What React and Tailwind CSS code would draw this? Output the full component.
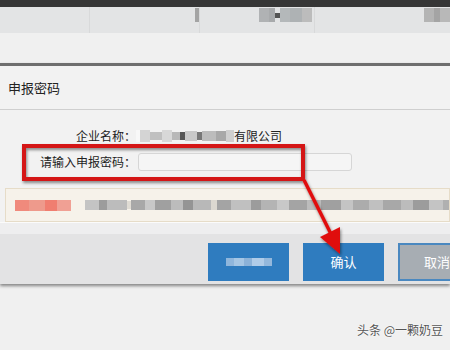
import React from 'react';

const cjk = { fontFamily: '"Noto Sans CJK SC", "Liberation Sans", sans-serif' };

// pixelated (mosaic) blocks standing in for blurred text
function Mosaic({ cells, className = '' }) {
    return (
        <div className={`flex items-center shrink-0 ${className}`}>
            {cells.map((c, i) => (
                <div key={i} className="shrink-0" style={{ width: c[0], height: c[1], background: c[2] }} />
            ))}
        </div>
    );
}

export default function App() {
    const company = [
        [4, 12, '#f8f8f8'], [10, 12, '#d4d4d4'], [12, 8, '#c0c0c0'], [10, 12, '#d8d8d8'],
        [8, 8, '#b8b8b8'], [5, 8, '#555'], [12, 10, '#c8c8c8'], [5, 8, '#777'],
        [14, 10, '#bcbcbc'], [10, 10, '#a8a8a8'], [8, 12, '#cfcfcf'],
    ];
    const notice = [
        [14, 10, '#c4c4c4'], [8, 10, '#9c9c9c'], [20, 10, '#bcbcbc'], [4, 8, '#e0dcd4'],
        [14, 10, '#a8a8a8'], [10, 10, '#c8c8c8'], [16, 10, '#a0a0a0'], [12, 10, '#bcbcbc'],
        [10, 10, '#949494'], [18, 10, '#b8b8b8'], [6, 10, '#dcd8d0'], [14, 10, '#a4a4a4'],
        [20, 10, '#c0c0c0'], [10, 10, '#9c9c9c'], [16, 10, '#b4b4b4'], [12, 10, '#c8c8c8'],
        [18, 10, '#a4a4a4'], [14, 10, '#bcbcbc'], [20, 10, '#a0a0a0'], [12, 10, '#c4c4c4'],
        [16, 10, '#acacac'], [14, 10, '#c0c0c0'], [18, 10, '#a8a8a8'], [12, 10, '#bcbcbc'],
        [16, 10, '#9c9c9c'], [14, 10, '#c4c4c4'], [20, 10, '#b0b0b0'],
    ];

    return (
        <div className="relative w-[450px] h-[350px] overflow-hidden bg-[#f0f0f0] text-[#222]" style={cjk}>
            {/* page behind the dialog */}
            <div className="h-[7px] bg-[#363636]" />
            <div className="h-[26px] bg-[#e3e4e5] flex relative">
                <div className="w-[90px] border-r border-[#d8d9da]" />
                <div className="w-[110px] border-r border-[#d8d9da] relative">
                    <div className="absolute right-0 top-[1px] w-[4px] h-[14px] bg-[#a4a4a4] blur-[0.5px]" />
                </div>
                <div className="w-[115px] border-r border-[#d8d9da] flex items-start pt-[1px] pl-[59px]">
                    <Mosaic cells={[[10, 14, '#b0b2b4'], [6, 14, '#a8aaac'], [5, 5, '#555'], [10, 14, '#b4b8ba'], [12, 14, '#aeb2b4'], [10, 14, '#bcbcbc']]} className="blur-[0.5px]" />
                </div>
                <div className="flex-1 flex justify-end items-start pt-[1px]">
                    <Mosaic cells={[[10, 14, '#b4b4b4'], [6, 14, '#a4a4a4'], [10, 14, '#b8b8b8']]} className="blur-[0.5px]" />
                </div>
            </div>
            <div className="h-[30px] bg-[#f0f0f0]" />

            {/* dialog */}
            <div className="border-t-[3px] border-[#6e6e6e] bg-[#f2f2f2] shadow-[0_2px_3px_rgba(0,0,0,0.45)]">
                <div className="h-[44px] border-b border-[#cfcfcf] flex items-center pl-[8px] text-[13px]">申报密码</div>

                <div className="pt-[16px] text-[12px]">
                    <div className="flex items-center h-[20px]">
                        <div className="w-[136px] text-right">企业名称：</div>
                        <Mosaic cells={company} className="blur-[0.6px]" />
                        <span>有限公司</span>
                    </div>
                    <div className="flex items-center h-[20px] mt-[6px]">
                        <div className="w-[136px] text-right">请输入申报密码：</div>
                        <div className="ml-[2px] w-[214px] h-[18px] rounded-[3px] border border-[#d6d6d6] bg-[#f5f5f5]" />
                    </div>
                    <div className="ml-[5px] mt-[16px] h-[34px] border border-[#e6dcc8] bg-[#f6f2ea] flex items-center pl-[9px] gap-[14px] overflow-hidden">
                        <Mosaic cells={[[14, 11, '#f08a7c'], [16, 11, '#ee9a8c'], [12, 11, '#f07e70'], [14, 11, '#f0a094']]} className="blur-[0.6px]" />
                        <Mosaic cells={notice} className="blur-[0.6px]" />
                    </div>
                    <div className="h-[12px] bg-[#eeeeef] border-t border-[#fbfbfb]" />
                </div>

                <div className="h-[50px] bg-[#e3e3e4] flex items-start pt-[9px] pl-[208px] gap-[14px] overflow-hidden">
                    <div className="shrink-0 w-[81px] h-[38px] bg-[#2f7cbf] flex items-center justify-center">
                        <Mosaic cells={[[8, 8, '#8fb6dc'], [10, 8, '#a6c6e4'], [8, 8, '#8cb2d8'], [12, 8, '#b0cce8'], [8, 8, '#94b8dc']]} className="blur-[0.6px]" />
                    </div>
                    <div className="shrink-0 w-[81px] h-[38px] bg-[#2f7cbf] text-white text-[13px] flex items-center justify-center">确认</div>
                    <div className="shrink-0 w-[81px] h-[38px] bg-[#a7adb3] border-2 border-[#4a88c0] text-white text-[13px] flex items-center pl-[24px]">取消</div>
                </div>
            </div>

            {/* watermark */}
            <div className="absolute left-[357px] top-[321px] text-[12px] text-[#555] [text-shadow:0_0_2px_#fff,0_0_1px_#fff]">头条 @一颗奶豆</div>

            {/* red annotation */}
            <svg className="absolute inset-0 pointer-events-none" width="450" height="350">
                <defs>
                    <filter id="sh" x="-10%" y="-10%" width="120%" height="130%">
                        <feDropShadow dx="1" dy="2" stdDeviation="1.5" floodColor="#000" floodOpacity="0.45" />
                    </filter>
                </defs>
                <g filter="url(#sh)">
                    <rect x="24" y="146" width="279" height="33" fill="none" stroke="#d41616" strokeWidth="4" />
                    <line x1="304" y1="180" x2="332" y2="236" stroke="#e01010" strokeWidth="3.5" />
                    <polygon points="340,254 320,237 340,227" fill="#e01010" />
                </g>
            </svg>
        </div>
    );
}
